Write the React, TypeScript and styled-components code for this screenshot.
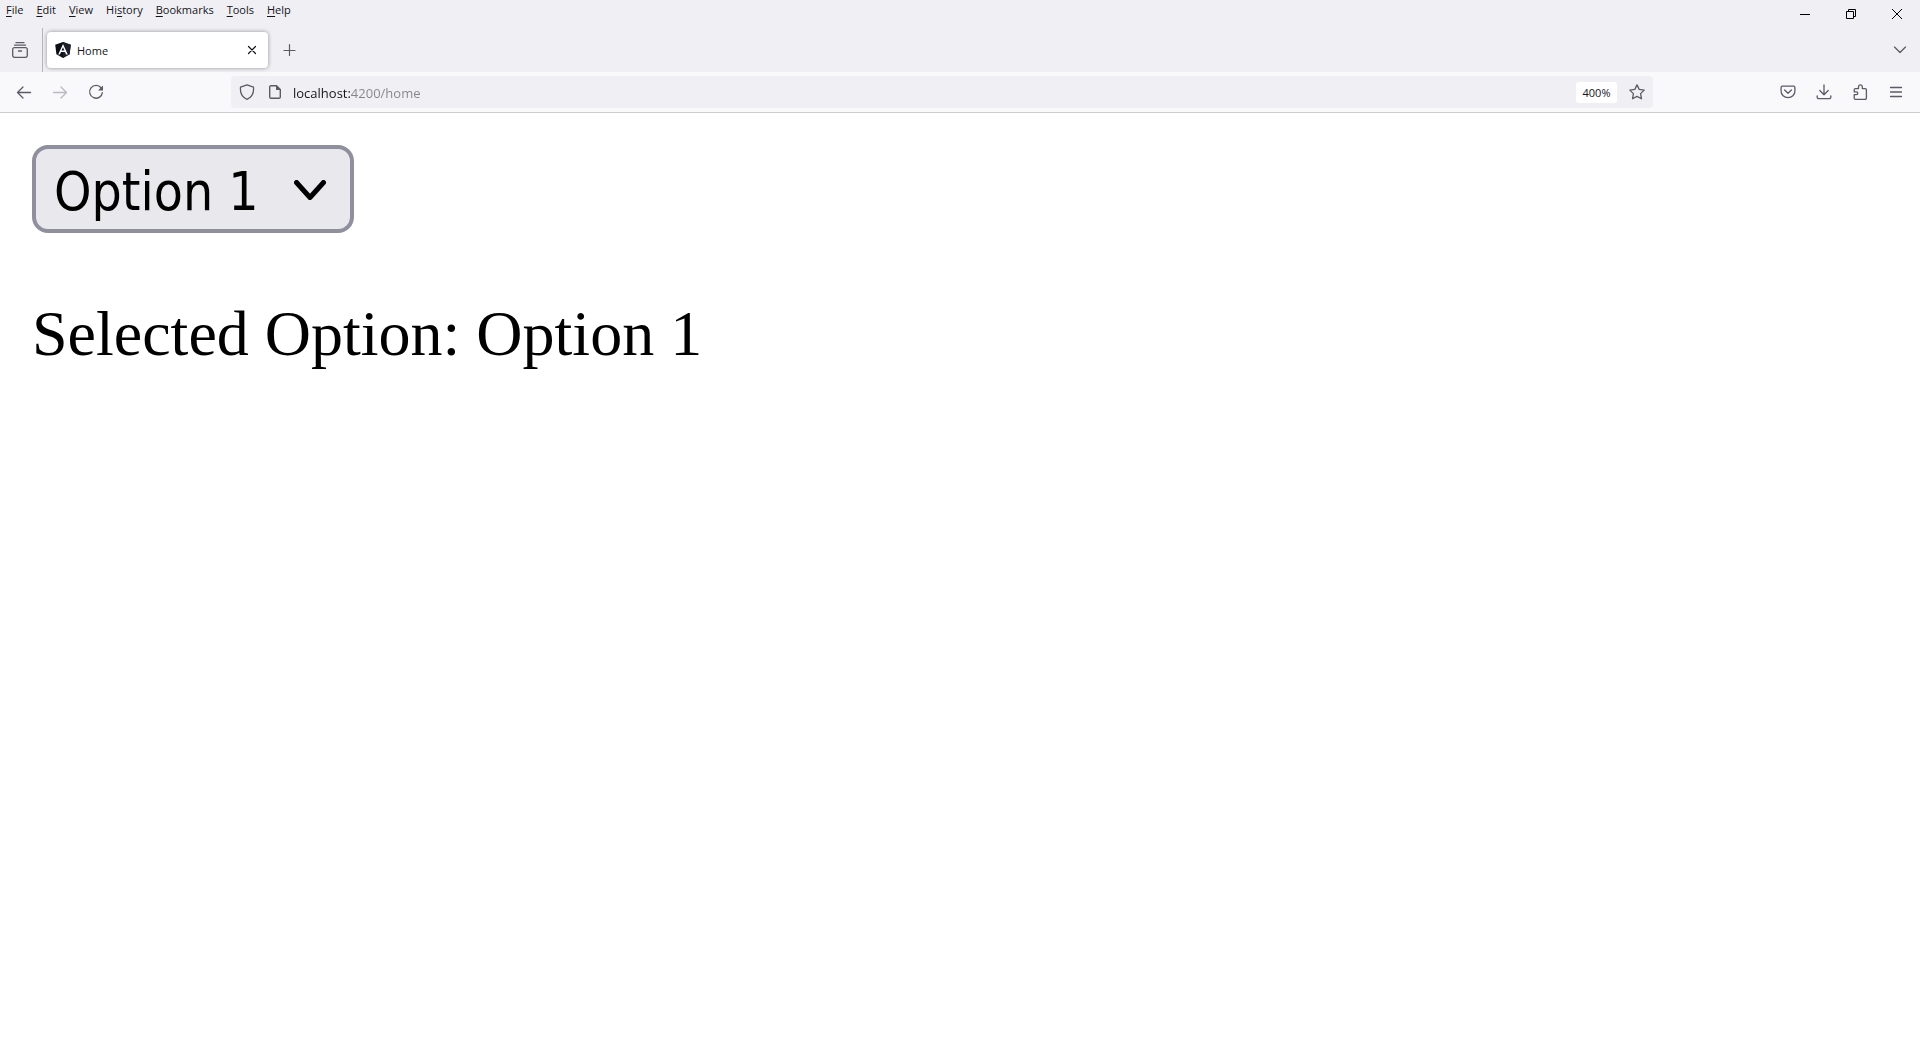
import React, { useState } from "react";
import styled, { createGlobalStyle } from "styled-components";

const GlobalStyle = createGlobalStyle`
  *, *::before, *::after { box-sizing: border-box; }
  body { margin: 0; background: #ffffff; color: #000000; }
`;

const Chrome = styled.header`
  background: #f0f0f4;
  color: #15141a;
  font-family: "Open Sans", "Noto Sans", sans-serif;
  font-size: 11px;
  line-height: 16px;
`;

const TitleBar = styled.div`
  display: flex;
  align-items: flex-start;
  justify-content: space-between;
  height: 28px;
`;

const MenuBar = styled.nav`
  display: flex;
  gap: 13px;
  padding: 2px 6px;
`;

const MenuItem = styled.button`
  border: 0;
  padding: 0;
  background: none;
  color: inherit;
  font: inherit;

  u { text-underline-offset: 2px; }
`;

const WindowControls = styled.div`
  display: flex;
`;

const IconButton = styled.button<{ $width?: number; $height?: number; $faded?: boolean }>`
  display: flex;
  flex: none;
  align-items: center;
  justify-content: center;
  width: ${({ $width = 36 }) => $width}px;
  height: ${({ $height = 32 }) => $height}px;
  border: 0;
  padding: 0;
  background: none;
  color: #5b5b66;
  opacity: ${({ $faded }) => ($faded ? 0.4 : 1)};
`;

const WindowButton = styled(IconButton)`
  color: #000000;
`;

const TabCloseButton = styled(IconButton)`
  color: #15141a;
`;

const TabStrip = styled.div`
  display: flex;
  align-items: center;
  height: 44px;
  padding: 0 2px;
`;

const TabDivider = styled.div`
  align-self: stretch;
  width: 1px;
  margin: 0 4px;
  background: #b5b5bb;
`;

const Tab = styled.div`
  display: flex;
  align-items: center;
  gap: 6px;
  width: 221px;
  height: 36px;
  padding: 0 4px 0 8px;
  border-radius: 4px;
  background: #ffffff;
  box-shadow: 0 0 4px rgba(0, 0, 0, 0.4);
`;

const TabTitle = styled.span`
  flex: 1;
  padding-top: 2px;
`;

const StripSpace = styled.div`
  flex: 1;
`;

const NavBar = styled.div`
  display: flex;
  align-items: center;
  height: 41px;
  padding: 0 6px;
  border-bottom: 1px solid #cccccc;
  background: #f9f9fb;
`;

const NavSpacer = styled.div`
  flex: 0 1 117px;
`;

const AddressBar = styled.div`
  display: flex;
  flex: 1;
  align-items: center;
  height: 32px;
  padding-left: 2px;
  border-radius: 4px;
  background: #f0f0f4;
`;

const AddressInput = styled.input`
  flex: 1;
  min-width: 0;
  height: 24px;
  margin-left: 4px;
  border: 0;
  padding: 2px 0 0;
  outline: 0;
  background: linear-gradient(to right, #15141a 57px, #85848c 57px);
  background-clip: text;
  -webkit-background-clip: text;
  color: transparent;
  caret-color: #15141a;
  font-family: "Open Sans", "Noto Sans", sans-serif;
  font-size: 13px;
`;

const ZoomButton = styled.button`
  height: 21px;
  width: 41px;
  margin-right: 4px;
  border: 0;
  border-radius: 3px;
  padding: 2px 0 0;
  background: #ffffff;
  color: #15141a;
  font: inherit;
`;

const Page = styled.main`
  padding: 32px;
`;

const SelectBox = styled.div`
  display: inline-grid;
  align-items: center;
  vertical-align: top;
  color: #000000;

  > * { grid-area: 1 / 1; }
  svg {
    justify-self: end;
    margin: 2px 28px 0 0;
    pointer-events: none;
  }
`;

const Select = styled.select`
  appearance: none;
  height: 88px;
  padding: 4px 91px 0 18px;
  border: 4px solid #8f8f9d;
  border-radius: 16px;
  background: #e9e9ed;
  color: inherit;
  font-family: "DejaVu Sans Condensed", "DejaVu Sans", sans-serif;
  font-size: 53px;
`;

const Result = styled.p`
  margin: 64px 0;
  font-family: "Liberation Serif", "Times New Roman", serif;
  font-size: 64px;
  line-height: 74px;
`;

interface GlyphProps {
  d: string;
  size?: number;
  weight?: number;
  crisp?: boolean;
}

const Glyph = ({ d, size = 16, weight = 1.3, crisp }: GlyphProps) => (
  <svg
    width={size}
    height={size}
    viewBox={`0 0 ${size} ${size}`}
    fill="none"
    stroke="currentColor"
    strokeWidth={weight}
    strokeLinecap={crisp ? "butt" : "round"}
    strokeLinejoin={crisp ? "miter" : "round"}
    aria-hidden="true"
  >
    <path d={d} />
  </svg>
);

const AngularLogo = () => (
  <svg width="16" height="16" viewBox="0 0 16 16" aria-hidden="true">
    <path d="M8 0 15.8 2.7 14.6 12.3 8 16 1.4 12.3 .2 2.7Z" fill="#0b0d17" />
    <path d="M8 0 15.8 2.7 14.6 12.3 8 16Z" fill="#1d2029" />
    <path
      d="M8 1.9 3.2 12.5H5L6 10.1H10L11 12.5H12.8ZM8 5.2 9.4 8.6H6.6Z"
      fill="#ffffff"
      fillRule="evenodd"
    />
  </svg>
);

const ReloadIcon = () => (
  <svg width="16" height="16" viewBox="0 0 16 16" fill="none" stroke="currentColor" aria-hidden="true">
    <path d="M13.2 4A6.4 6.4 0 1 0 14.4 8.6" strokeWidth="1.3" strokeLinecap="round" />
    <path d="M15 1.5V6.5H10Z" fill="currentColor" stroke="none" />
  </svg>
);

const PageIcon = () => (
  <svg width="16" height="16" viewBox="0 0 16 16" fill="none" stroke="currentColor" aria-hidden="true">
    <path
      d="M4 1.7H9.5L13.3 5.5V13A1.3 1.3 0 0 1 12 14.3H4A1.3 1.3 0 0 1 2.7 13V3A1.3 1.3 0 0 1 4 1.7Z"
      strokeWidth="1.4"
    />
    <path d="M9 1.3V6H13.7Z" fill="currentColor" stroke="none" />
  </svg>
);

const SelectArrow = () => (
  <svg width="32" height="20" viewBox="0 0 32 20" aria-hidden="true">
    <path
      d="M2.5 2.5 16 17.5 29.5 2.5"
      fill="none"
      stroke="currentColor"
      strokeWidth="5"
      strokeLinejoin="round"
      strokeLinecap="round"
    />
  </svg>
);

const menus: [string, string, string][] = [
  ["", "F", "ile"],
  ["", "E", "dit"],
  ["", "V", "iew"],
  ["Hi", "s", "tory"],
  ["", "B", "ookmarks"],
  ["", "T", "ools"],
  ["", "H", "elp"],
];

const icons = {
  minimize: "M0 5.5H10",
  restore: "M.5 2.5H7.5V9.5H.5ZM2.5 2.5V.5H9.5V7.5H7.5",
  close: "M0 0 10 10M10 0 0 10",
  recent: "M4 .7H12M2.5 3.2H13.5M2.4 5.6H13.6A1.7 1.7 0 0 1 15.3 7.3V13.6A1.7 1.7 0 0 1 13.6 15.3H2.4A1.7 1.7 0 0 1 .7 13.6V7.3A1.7 1.7 0 0 1 2.4 5.6ZM6.5 9H9.5",
  tabClose: "M4.5 4.5 11.5 11.5M11.5 4.5 4.5 11.5",
  plus: "M8.5 2.5V13.5M3 8.5H14",
  chevron: "M2.5 5 8 10.5 13.5 5",
  back: "M14.5 8.5H1.5M7 3 1.5 8.5 7 14",
  forward: "M1.5 8.5H14.5M9 3 14.5 8.5 9 14",
  shield: "M8 .8 14.5 3.2C15 8.5 12.8 13.3 8 15.3 3.2 13.3 1 8.5 1.5 3.2Z",
  star: "M8 .9 10.2 5.4 15.2 6.1 11.6 9.6 12.5 14.8 8 12.4 3.5 14.8 4.4 9.6 .8 6.1 5.8 5.4Z",
  pocket: "M2.4 2.2H13.6A1.3 1.3 0 0 1 14.9 3.5V7.2A6.9 6.5 0 0 1 1.1 7.2V3.5A1.3 1.3 0 0 1 2.4 2.2ZM4.6 6 8 9.3 11.4 6",
  download: "M8 .8V10.5M3.8 6.5 8 10.7 12.2 6.5M1.2 11.8V13.2A1.5 1.5 0 0 0 2.7 14.7H13.3A1.5 1.5 0 0 0 14.8 13.2V11.8",
  extension: "M2.2 10.6V14.1A1.2 1.2 0 0 0 3.4 15.3H13.2A1.2 1.2 0 0 0 14.4 14.1V5.8A1.2 1.2 0 0 0 13.2 4.6H10.3V2.8A1.9 1.9 0 0 0 6.5 2.8V4.6H3.4A1.2 1.2 0 0 0 2.2 5.8V7.8H4.4A1.4 1.4 0 0 1 4.4 10.6Z",
  menu: "M2.5 3.5H13.5M2.5 8H13.5M2.5 12.5H13.5",
};

const options = ["Option 1", "Option 2", "Option 3"];

export default function App() {
  const [selected, setSelected] = useState(options[0]);

  return (
    <>
      <GlobalStyle />
      <Chrome>
        <TitleBar>
          <MenuBar aria-label="Menu bar">
            {menus.map(([before, key, after]) => (
              <MenuItem key={key + after} type="button">
                {before}<u>{key}</u>{after}
              </MenuItem>
            ))}
          </MenuBar>
          <WindowControls>
            <WindowButton $width={46} $height={28} aria-label="Minimize">
              <Glyph d={icons.minimize} size={10} weight={1} crisp />
            </WindowButton>
            <WindowButton $width={46} $height={28} aria-label="Restore">
              <Glyph d={icons.restore} size={10} weight={1} crisp />
            </WindowButton>
            <WindowButton $width={46} $height={28} aria-label="Close">
              <Glyph d={icons.close} size={10} weight={1} crisp />
            </WindowButton>
          </WindowControls>
        </TitleBar>
        <TabStrip>
          <IconButton aria-label="Recent browsing"><Glyph d={icons.recent} /></IconButton>
          <TabDivider />
          <Tab>
            <AngularLogo />
            <TabTitle>Home</TabTitle>
            <TabCloseButton $width={24} $height={24} aria-label="Close tab">
              <Glyph d={icons.tabClose} weight={1.2} />
            </TabCloseButton>
          </Tab>
          <IconButton $width={42} aria-label="New tab"><Glyph d={icons.plus} weight={1.2} /></IconButton>
          <StripSpace />
          <IconButton aria-label="List all tabs"><Glyph d={icons.chevron} /></IconButton>
        </TabStrip>
        <NavBar>
          <IconButton aria-label="Back"><Glyph d={icons.back} /></IconButton>
          <IconButton $faded aria-label="Forward"><Glyph d={icons.forward} /></IconButton>
          <IconButton aria-label="Reload"><ReloadIcon /></IconButton>
          <NavSpacer />
          <AddressBar>
            <IconButton $width={28} aria-label="Tracking protection"><Glyph d={icons.shield} /></IconButton>
            <IconButton $width={28} aria-label="Site information"><PageIcon /></IconButton>
            <AddressInput aria-label="Address" defaultValue="localhost:4200/home" spellCheck={false} />
            <ZoomButton type="button">400%</ZoomButton>
            <IconButton $width={32} aria-label="Bookmark this page"><Glyph d={icons.star} /></IconButton>
          </AddressBar>
          <NavSpacer />
          <IconButton aria-label="Save to Pocket"><Glyph d={icons.pocket} /></IconButton>
          <IconButton aria-label="Downloads"><Glyph d={icons.download} /></IconButton>
          <IconButton aria-label="Extensions"><Glyph d={icons.extension} /></IconButton>
          <IconButton aria-label="Application menu"><Glyph d={icons.menu} /></IconButton>
        </NavBar>
      </Chrome>
      <Page>
        <SelectBox>
          <Select aria-label="Option" value={selected} onChange={(e) => setSelected(e.target.value)}>
            {options.map((option) => (
              <option key={option}>{option}</option>
            ))}
          </Select>
          <SelectArrow />
        </SelectBox>
        <Result>Selected Option: {selected}</Result>
      </Page>
    </>
  );
}
